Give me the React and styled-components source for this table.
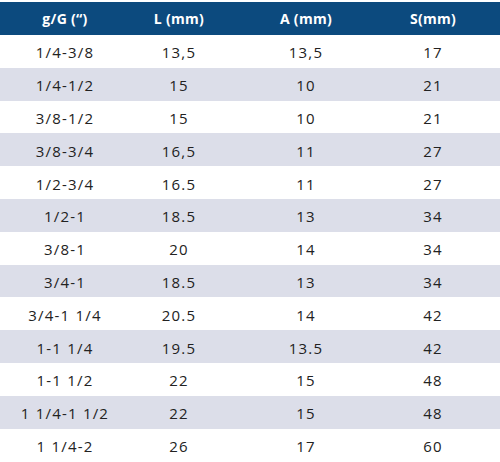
import React from 'react';
import styled, { createGlobalStyle } from 'styled-components';

const GlobalStyle = createGlobalStyle`
  html, body {
    margin: 0;
    padding: 0;
    background: #fff;
  }
`;

const Table = styled.div`
  width: 500px;
  padding-top: 2px;
  font-family: "Open Sans", "DejaVu Sans", sans-serif;
`;

const Row = styled.div`
  display: grid;
  grid-template-columns: 130px 98px 156px 98px;
  padding-right: 18px;
  height: ${(props) => (props.head ? '33px' : '32.8px')};
  align-items: center;
  background-color: ${(props) =>
    props.head ? '#0c4a7e' : props.striped ? '#dcdee9' : '#ffffff'};
`;

const Cell = styled.div`
  text-align: center;
  white-space: nowrap;
  font-size: ${(props) => (props.head ? '14px' : '15px')};
  font-weight: ${(props) => (props.head ? 700 : 400)};
  letter-spacing: ${(props) => (props.head ? '0.3px' : '1.2px')};
  color: ${(props) => (props.head ? '#ffffff' : '#222222')};
  padding-top: ${(props) => (props.head ? '0' : '2px')};
`;

const headers = ['g/G (\u201C)', 'L (mm)', 'A (mm)', 'S(mm)'];

const rows = [
  ['1/4-3/8', '13,5', '13,5', '17'],
  ['1/4-1/2', '15', '10', '21'],
  ['3/8-1/2', '15', '10', '21'],
  ['3/8-3/4', '16,5', '11', '27'],
  ['1/2-3/4', '16.5', '11', '27'],
  ['1/2-1', '18.5', '13', '34'],
  ['3/8-1', '20', '14', '34'],
  ['3/4-1', '18.5', '13', '34'],
  ['3/4-1 1/4', '20.5', '14', '42'],
  ['1-1 1/4', '19.5', '13.5', '42'],
  ['1-1 1/2', '22', '15', '48'],
  ['1 1/4-1 1/2', '22', '15', '48'],
  ['1 1/4-2', '26', '17', '60'],
];

const App = () => {
  return (
    <>
      <GlobalStyle />
      <Table>
        <Row head>
          {headers.map((h) => (
            <Cell head key={h}>{h}</Cell>
          ))}
        </Row>
        {rows.map((r, i) => (
          <Row key={i} striped={i % 2 === 1}>
            {r.map((c, j) => (
              <Cell key={j}>{c}</Cell>
            ))}
          </Row>
        ))}
      </Table>
    </>
  );
};

export default App;
